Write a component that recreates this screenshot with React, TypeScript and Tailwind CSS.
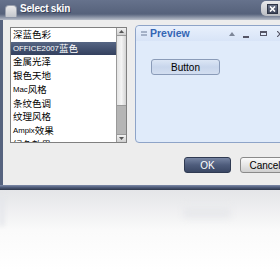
import React from "react";

const items = [
  "深蓝色彩",
  "OFFICE2007蓝色",
  "金属光泽",
  "银色天地",
  "Mac风格",
  "条纹色调",
  "纹理风格",
  "Ampix效果",
  "绿色效果",
];

function Label({ text }: { text: string }) {
  const parts = text.split(/([A-Za-z0-9]+)/).filter((p) => p.length > 0);
  return (
    <>
      {parts.map((p, i) =>
        /^[A-Za-z0-9]+$/.test(p) ? (
          <span key={i} className="text-[7.8px]" style={{ fontFamily: '"Liberation Sans", sans-serif' }}>
            {p}
          </span>
        ) : (
          <span key={i} className="text-[9.5px]">
            {p}
          </span>
        )
      )}
    </>
  );
}

export default function App() {
  const font = { fontFamily: '"Liberation Sans", "Noto Sans CJK SC", sans-serif' };
  return (
    <div className="w-[280px] h-[270px] bg-white overflow-hidden relative" style={font}>
      {/* window */}
      <div className="h-[190px] flex flex-col">
        {/* title bar */}
        <div className="h-[20px] flex items-start bg-gradient-to-b from-[#66728c] via-[#56627b] via-70% to-[#b9bfca] relative">
          <div className="ml-[5px] mt-[5px] w-[12px] h-[12px] rounded-t-[4px] bg-gradient-to-b from-[#eaeaea] to-[#c4c7cd] border border-[#9aa0ad] border-b-0" />
          <span
            className="ml-[3px] mt-[2px] text-white font-bold text-[10px] leading-[13px] tracking-[-0.2px]"
            style={{ textShadow: "1px 1px 0 #3a4358" }}
          >
            Select skin
          </span>
          <div className="absolute right-0 top-[1px] w-[19px] h-[15px] rounded-l-[5px] bg-gradient-to-b from-[#e9eaec] to-[#b9bcc2] flex items-center justify-end pr-[2px]">
            <div className="w-[11px] h-[10px] bg-gradient-to-b from-[#6a7388] to-[#3c4459] border border-[#2d3445] flex items-center justify-center">
              <svg width="7" height="6" viewBox="0 0 7 6">
                <path d="M1 0.5 L6 5.5 M6 0.5 L1 5.5" stroke="#fff" strokeWidth="1.6" />
              </svg>
            </div>
          </div>
        </div>
        {/* body */}
        <div className="flex-1 flex flex-col bg-[#ededed] border-l-[3px] border-[#56637f]">
          <div className="flex pt-[7px] pl-[7px] gap-[8px]">
            {/* list box */}
            <div className="w-[117px] shrink-0 h-[116px] flex border border-[#808080] bg-white">
              <div
                className="flex-1 flex flex-col overflow-hidden text-black"
                style={{ fontFamily: '"Noto Sans CJK SC", sans-serif' }}
              >
                {items.map((t, i) => (
                  <div
                    key={t}
                    className={
                      i === 1
                        ? "h-[13.7px] shrink-0 flex items-center pl-[2px] leading-none text-white bg-gradient-to-b from-[#566684] to-[#33405e]"
                        : "h-[13.7px] shrink-0 flex items-center pl-[2px] leading-none"
                    }
                  >
                    <Label text={t} />
                  </div>
                ))}
              </div>
              {/* scrollbar */}
              <div className="w-[10px] flex flex-col bg-[#b5b5b5] border-l border-[#9a9a9a]">
                <div className="h-[8px] bg-gradient-to-b from-[#f2f2f2] to-[#cfcfcf] border-b border-[#9a9a9a] flex items-center justify-center">
                  <svg width="5" height="3" viewBox="0 0 5 3"><path d="M0 3 L2.5 0 L5 3 Z" fill="#555" /></svg>
                </div>
                <div className="h-[70px] bg-gradient-to-r from-[#e4e4e4] via-[#f4f4f4] to-[#d4d4d4] border-b border-[#9a9a9a]" />
                <div className="flex-1" />
                <div className="h-[8px] bg-gradient-to-b from-[#f2f2f2] to-[#cfcfcf] border-t border-[#9a9a9a] flex items-center justify-center">
                  <svg width="5" height="3" viewBox="0 0 5 3"><path d="M0 0 L2.5 3 L5 0 Z" fill="#555" /></svg>
                </div>
              </div>
            </div>
            {/* preview panel */}
            <div className="w-[150px] shrink-0 h-[118px] -mt-[2px] rounded-[4px] border border-[#8ea4c8] bg-[#e0ebfa] flex flex-col">
              <div className="h-[15px] shrink-0 flex items-center bg-gradient-to-b from-[#e8f0fc] to-[#d8e4f7] rounded-t-[4px]">
                <svg width="6" height="5" viewBox="0 0 6 5" className="ml-[5px] shrink-0">
                  <path d="M0 1 H6 M0 4 H6" stroke="#6a7a96" strokeWidth="1" />
                </svg>
                <span className="ml-[3px] text-[10.5px] text-[#3566b4] leading-none" style={{ fontWeight: 600 }}>
                  Preview
                </span>
                <div className="w-[39px] shrink-0" />
                <svg width="6" height="4" viewBox="0 0 6 4" className="mr-[8px] mt-[1px] shrink-0"><path d="M0 4 L3 0 L6 4 Z" fill="#7d8698" /></svg>
                <div className="w-[6px] h-[2px] bg-[#556] mt-[6px] mr-[11px] shrink-0" />
                <div className="w-[7px] h-[5px] border border-[#556] border-t-2 mr-[10px] shrink-0" />
                <svg width="6" height="6" viewBox="0 0 6 6" className="shrink-0"><path d="M0 0 L6 6 M6 0 L0 6" stroke="#556" strokeWidth="1.2" /></svg>
              </div>
              <div className="pl-[15px] pt-[18px]">
                <div className="w-[69px] h-[16px] rounded-[3px] border border-[#8a9bb8] bg-gradient-to-b from-[#dce6f5] via-[#c8d6ec] to-[#d3def0] flex items-center justify-center text-[10px] text-black">
                  Button
                </div>
              </div>
            </div>
          </div>
          {/* buttons */}
          <div className="flex justify-end gap-[9px] mt-[14px] -mr-[10px]">
            <div className="w-[47px] h-[16px] rounded-[3px] border border-[#2f3a52] bg-gradient-to-b from-[#7785a3] via-[#4e5c7c] to-[#3a4764] flex items-center justify-center text-white text-[10px]">
              OK
            </div>
            <div className="w-[50px] h-[16px] rounded-[3px] border border-[#8a8a8a] bg-gradient-to-b from-[#fafafa] via-[#e6e6e6] to-[#d0d0d0] flex items-center justify-center text-black text-[10px]">
              Cancel
            </div>
          </div>
        </div>
        {/* bottom border */}
        <div className="h-[5px] bg-gradient-to-b from-[#7f8cab] via-[#4d5a77] to-[#2e374b]" />
      </div>
      {/* reflection */}
      <div className="h-[80px] relative bg-gradient-to-b from-[#e4e5e8] via-[#fafafa] to-white">
        <div className="absolute left-[183px] top-[16px] w-[48px] h-[12px] rounded-[3px] bg-[#e8e9ec] blur-[3px]" />
        <div className="absolute left-[0px] top-[6px] w-[4px] h-[30px] bg-[#e3e5ea] blur-[2px]" />
      </div>
    </div>
  );
}
